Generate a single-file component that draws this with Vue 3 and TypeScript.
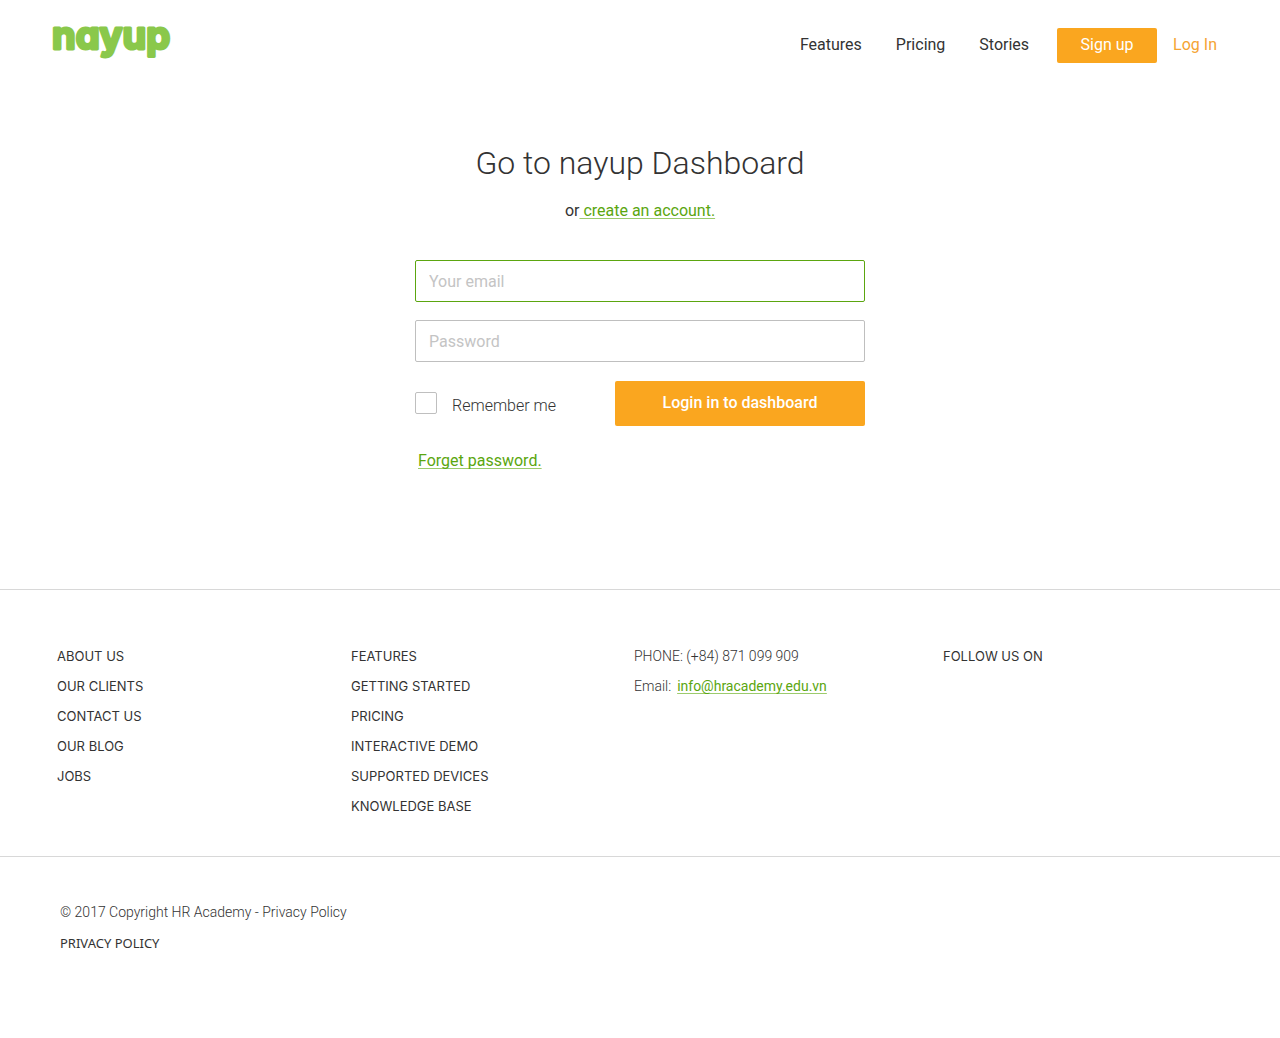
<script setup lang="ts">
import { ref } from 'vue'

const email = ref('')
const password = ref('')
const remember = ref(false)

const navLinks: string[] = ['Features', 'Pricing', 'Stories']
const companyLinks: string[] = ['ABOUT US', 'OUR CLIENTS', 'CONTACT US', 'OUR BLOG', 'JOBS']
const productLinks: string[] = [
  'FEATURES',
  'GETTING STARTED',
  'PRICING',
  'INTERACTIVE DEMO',
  'SUPPORTED DEVICES',
  'KNOWLEDGE BASE',
]
</script>

<template>
  <div class="page">
    <header class="header">
      <a class="logo" href="#">
        <svg width="140" height="50" viewBox="0 0 140 50">
          <text x="2" y="32">nayup</text>
        </svg>
      </a>
      <div class="header-right">
        <nav class="nav">
          <a v-for="link in navLinks" :key="link" href="#">{{ link }}</a>
        </nav>
        <button class="signup" type="button">Sign up</button>
        <a class="login-link" href="#">Log In</a>
      </div>
    </header>

    <main class="main">
      <h1>Go to nayup Dashboard</h1>
      <p class="sub">or<a class="green" href="#">&nbsp;create an account.</a></p>

      <form class="form" @submit.prevent>
        <input v-model="email" class="field active" type="email" placeholder="Your email" aria-label="Your email" />
        <input v-model="password" class="field" type="password" placeholder="Password" aria-label="Password" />
        <div class="row">
          <label class="remember">
            <input v-model="remember" type="checkbox" />
            <span>Remember me</span>
          </label>
          <button class="submit" type="submit">Login in to dashboard</button>
        </div>
        <a class="green forget" href="#">Forget password.</a>
      </form>
    </main>

    <footer>
      <div class="columns">
        <ul>
          <li v-for="link in companyLinks" :key="link"><a href="#">{{ link }}</a></li>
        </ul>
        <ul>
          <li v-for="link in productLinks" :key="link"><a href="#">{{ link }}</a></li>
        </ul>
        <div class="contact">
          <div>PHONE: (+84) 871 099 909</div>
          <div class="mail">
            <span>Email:</span>
            <a class="green" href="mailto:info@hracademy.edu.vn">info@hracademy.edu.vn</a>
          </div>
        </div>
        <div class="follow">FOLLOW US ON</div>
      </div>
      <div class="legal">
        <div class="copyright">© 2017 Copyright HR Academy - Privacy Policy</div>
        <a class="privacy" href="#">PRIVACY POLICY</a>
      </div>
    </footer>
  </div>
</template>

<style>
body {
  margin: 0;
  background: #fff;
}
</style>

<style scoped>
.page {
  font-family: Roboto, sans-serif;
  font-size: 16px;
  line-height: 20px;
  color: #333;
}

a {
  color: inherit;
  text-decoration: none;
}

.header {
  display: flex;
  justify-content: space-between;
  align-items: flex-start;
  height: 63px;
  padding: 17px 63px 0 50px;
}

.logo svg {
  display: block;
  overflow: visible;
}

.logo text {
  font-family: Inter, sans-serif;
  font-size: 38px;
  font-weight: 700;
  font-feature-settings: 'cv11';
  fill: #8ac84b;
  stroke: #8ac84b;
  stroke-width: 3px;
  stroke-linejoin: round;
}

.header-right {
  display: flex;
  align-items: center;
  padding-top: 11px;
}

.nav {
  display: flex;
  gap: 34px;
  margin-right: 28px;
}

.nav,
.login-link {
  padding-bottom: 2px;
}

.signup,
.submit {
  border: 0;
  border-radius: 2px;
  padding: 0 0 2px;
  background: #faa61f;
  color: #fff;
  font-family: inherit;
  font-size: 16px;
}

.signup {
  width: 100px;
  height: 35px;
  margin-right: 16px;
}

.login-link {
  color: #f5a432;
}

.main {
  display: flex;
  flex-direction: column;
  align-items: center;
  padding: 63px 20px 118px;
}

h1 {
  margin: 0;
  font-size: 32px;
  font-weight: 300;
  line-height: 40px;
}

.sub {
  margin: 18px 0 39px;
}

.green {
  color: #5ba60f;
  text-decoration: underline 1px #9ccb6c;
  text-underline-offset: 2px;
  text-decoration-skip-ink: none;
}

.form {
  display: flex;
  flex-direction: column;
  width: 100%;
  max-width: 450px;
}

.field {
  box-sizing: border-box;
  width: 100%;
  height: 42px;
  margin: 0 0 18px;
  padding: 0 13px;
  border: 1px solid #bfbfbf;
  border-radius: 2px;
  outline: 0;
  font-family: inherit;
  font-size: 16px;
  color: #333;
}

.field.active {
  border-color: #5ba60f;
}

.field::placeholder {
  color: #c4c4c4;
  opacity: 1;
}

.row {
  display: flex;
  justify-content: space-between;
  align-items: center;
  margin-top: 1px;
}

.remember {
  display: flex;
  align-items: flex-start;
  gap: 15px;
  font-weight: 300;
}

.remember span {
  padding-top: 4px;
}

.remember input {
  appearance: none;
  box-sizing: border-box;
  width: 22px;
  height: 22px;
  margin: 0;
  border: 1px solid #bfbfbf;
  border-radius: 2px;
}

.remember input:checked {
  background: #8ac84b;
}

.submit {
  width: 250px;
  height: 45px;
  font-weight: 500;
}

.forget {
  align-self: flex-start;
  margin: 25px 0 0 3px;
}

.columns {
  display: grid;
  grid-template-columns: 294fr 283fr 309fr 337fr;
  padding: 51px 0 35px 57px;
  border-top: 1px solid #d8d8d8;
  border-bottom: 1px solid #d8d8d8;
  line-height: 30px;
}

ul {
  margin: 0;
  padding: 0;
  list-style: none;
}

li,
.follow {
  font-family: Inter, sans-serif;
  font-size: 13px;
}

.contact {
  font-size: 14px;
  font-weight: 300;
}

.mail {
  display: flex;
  gap: 6px;
}

.mail a {
  font-weight: 400;
}

.legal {
  padding: 40px 60px 80px;
  font-size: 14px;
  line-height: 31px;
}

.copyright {
  font-weight: 300;
}

.privacy {
  font-family: 'Noto Sans', sans-serif;
  font-size: 13px;
}
</style>
